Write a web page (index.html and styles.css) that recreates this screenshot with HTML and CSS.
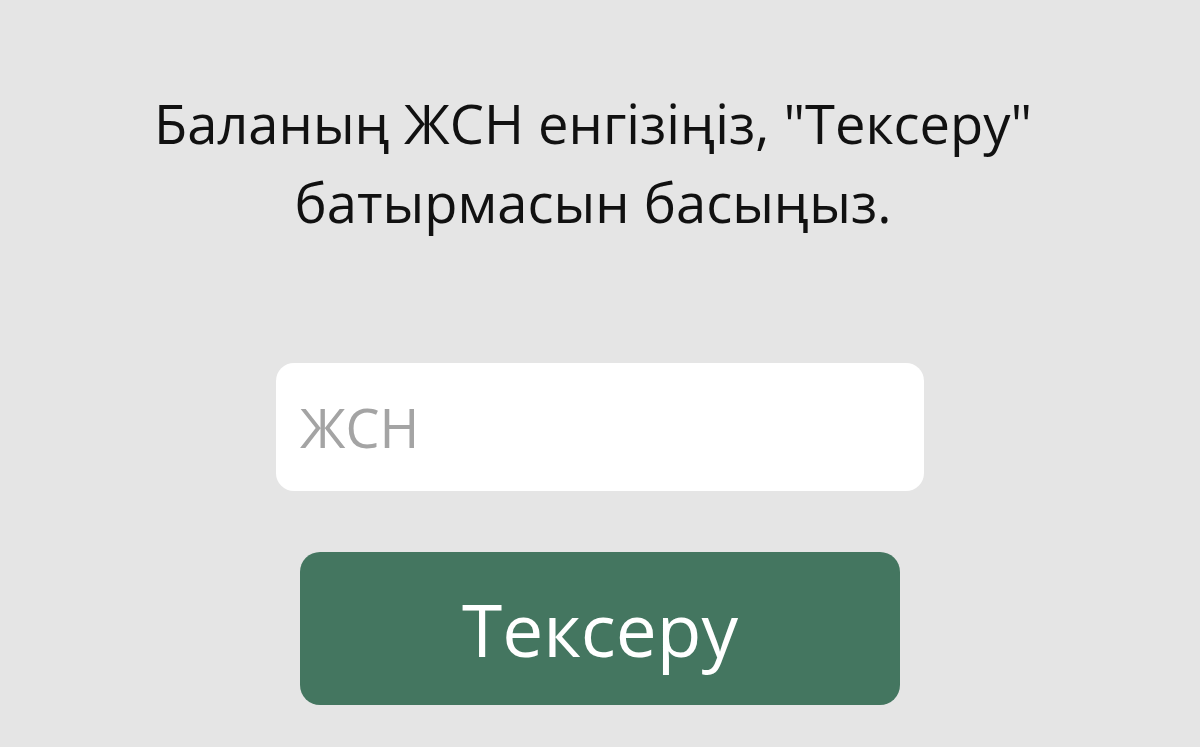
FILE: index.html
```html
<!DOCTYPE html>
<html lang="kk">
<head>
<meta charset="utf-8">
<title>ЖСН тексеру</title>
<link rel="stylesheet" href="styles.css">
</head>
<body>
<main class="page">
  <p class="intro">Баланың ЖСН енгізіңіз, "Тексеру"<br>батырмасын басыңыз.</p>
  <form class="form" onsubmit="return false">
    <input class="iin" type="text" placeholder="ЖСН">
    <button class="check" type="submit">Тексеру</button>
  </form>
</main>
</body>
</html>
```

FILE: styles.css
```css
html, body {
  margin: 0;
  padding: 0;
  height: 100%;
  background: #e5e5e5;
  font-family: "Open Sans", "Noto Sans", sans-serif;
}
.page {
  display: flex;
  flex-direction: column;
  align-items: center;
  padding-top: 84px;
}
.intro {
  margin: 0;
  padding-right: 14px;
  text-align: center;
  font-size: 54.3px;
  line-height: 79px;
  color: #111;
}
.form {
  display: flex;
  flex-direction: column;
  align-items: center;
  margin-top: 121px;
  gap: 61px;
}
.iin {
  box-sizing: border-box;
  width: 648px;
  height: 128px;
  border: none;
  border-radius: 18px;
  background: #fff;
  padding: 0 24px;
  font-family: inherit;
  font-size: 54px;
  color: #333;
  outline: none;
}
.iin::placeholder {
  color: #a4a4a4;
}
.check {
  box-sizing: border-box;
  width: 600px;
  height: 153px;
  border: none;
  border-radius: 20px;
  background: #447660;
  color: #fff;
  font-family: inherit;
  font-size: 73px;
  padding: 0;
}
```
